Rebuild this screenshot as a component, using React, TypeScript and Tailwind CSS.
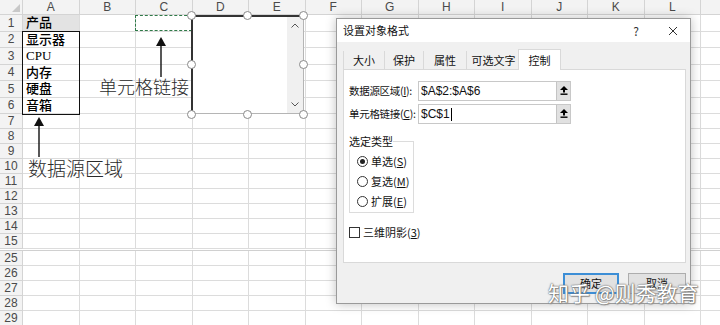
import React from "react";

const COLS = ["A", "B", "C", "D", "E", "F", "G", "H", "I", "J", "K", "L", "M"];
const TOP_ROWS = [1, 2, 3, 4, 5, 6];
const MID_ROWS = [7, 8, 9, 10, 11, 12, 13, 14, 15];
const LOW_ROWS = [25, 26, 27, 28, 29];

const cellText: Record<number, string> = {
  1: "产品",
  2: "显示器",
  3: "CPU",
  4: "内存",
  5: "硬盘",
  6: "音箱",
};

const HANDLES = [
  "left-[187px] top-[11px]",
  "left-[243px] top-[11px]",
  "left-[299px] top-[11px]",
  "left-[187px] top-[60px]",
  "left-[299px] top-[60px]",
  "left-[187px] top-[110px]",
  "left-[243px] top-[110px]",
  "left-[299px] top-[110px]",
];

function Row({ n, h }: { n: number; h: string }) {
  return (
    <div className={`flex ${h}`}>
      <div className="w-[23px] shrink-0 bg-[#f3f3f3] border-r border-b border-[#d4d4d4] flex items-center justify-center text-[12px] text-[#4a4a4a]">
        {n}
      </div>
      {COLS.map((c) => (
        <div
          key={c}
          className={`w-[56.5px] shrink-0 border-r border-b border-[#dcdcdc] flex items-center ${
            c === "A" && n === 1 ? "bg-[#e3e3e3]" : ""
          }`}
        >
          {c === "A" && cellText[n] && (
            <span className="pl-[3px] text-[13px] font-medium text-black [font-family:'Liberation_Serif','Noto_Sans_CJK_SC',serif]">
              {cellText[n]}
            </span>
          )}
        </div>
      ))}
    </div>
  );
}

function UpArrow({ className }: { className: string }) {
  return (
    <svg className={className} width="10" height="40" viewBox="0 0 10 40">
      <polygon points="5,0 0,9 10,9" fill="#111" />
      <line x1="5" y1="8" x2="5" y2="40" stroke="#111" strokeWidth="1.4" />
    </svg>
  );
}

function RefEdit() {
  return (
    <div className="w-[14px] h-full bg-[#e1e1e1] border-l border-[#c4c4c4] flex items-center justify-center">
      <svg width="8" height="10" viewBox="0 0 8 10">
        <polygon points="4,0 0,4 8,4" fill="#000" />
        <rect x="3" y="3.5" width="2" height="3" fill="#000" />
        <rect x="0.5" y="7.5" width="7" height="1.4" fill="#000" />
      </svg>
    </div>
  );
}

function Radio({ label, keyChar, checked }: { label: string; keyChar: string; checked?: boolean }) {
  return (
    <div className="flex items-center h-[20px] pl-[7px]">
      <span className="w-[11px] h-[11px] rounded-full border border-[#333] bg-white flex items-center justify-center">
        {checked && <span className="w-[5px] h-[5px] rounded-full bg-[#222]" />}
      </span>
      <span className="ml-[3px]">
        {label}(<span className="underline">{keyChar}</span>)
      </span>
    </div>
  );
}

export default function App() {
  return (
    <div className="relative w-[720px] h-[325px] overflow-hidden bg-white [font-family:'Liberation_Sans','Noto_Sans_CJK_SC',sans-serif]">
      {/* Column headers */}
      <div className="flex h-[15px]">
        <div className="w-[23px] shrink-0 bg-[#f3f3f3] border-r border-b border-[#d4d4d4] relative">
          <svg className="absolute right-[2px] bottom-[2px]" width="8" height="8" viewBox="0 0 8 8">
            <polygon points="8,0 8,8 0,8" fill="#c8c8c8" />
          </svg>
        </div>
        {COLS.map((c) => (
          <div
            key={c}
            className="w-[56.5px] shrink-0 bg-[#f3f3f3] border-r border-b border-[#d4d4d4] flex items-center justify-center text-[12px] text-[#4a4a4a]"
          >
            {c === "M" ? "" : c}
          </div>
        ))}
      </div>

      {/* Rows */}
      {TOP_ROWS.map((n) => (
        <Row key={n} n={n} h="h-[16.5px]" />
      ))}
      {MID_ROWS.map((n) => (
        <Row key={n} n={n} h="h-[15px]" />
      ))}
      <div className="h-[2px] border-b border-[#d0d0d0]" />
      {LOW_ROWS.map((n) => (
        <Row key={n} n={n} h="h-[15px]" />
      ))}

      {/* Data source border A2:A6 */}
      <div className="absolute left-[22px] top-[30.5px] w-[58px] h-[84px] border-[1.5px] border-[#111]" />

      {/* Copy marquee C1 */}
      <div className="absolute left-[135px] top-[15px] w-[57px] h-[16px] border-[1.5px] border-dashed border-[#2f7a48]" />

      {/* Listbox control */}
      <div className="absolute left-[191px] top-[15px] w-[113px] h-[99px] bg-white border-l-2 border-t-2 border-l-[#333] border-t-[#333] border-r border-b border-r-[#b5b5b5] border-b-[#b5b5b5] flex justify-end">
        <div className="w-[16px] h-full bg-[#f0f0f0] flex flex-col items-center justify-between py-[6px]">
          <svg width="8" height="5" viewBox="0 0 8 5">
            <polyline points="0.5,4.5 4,1 7.5,4.5" fill="none" stroke="#555" strokeWidth="1" />
          </svg>
          <svg width="8" height="5" viewBox="0 0 8 5">
            <polyline points="0.5,0.5 4,4 7.5,0.5" fill="none" stroke="#555" strokeWidth="1" />
          </svg>
        </div>
      </div>
      {HANDLES.map((p) => (
        <div key={p} className={`absolute ${p} w-[9px] h-[9px] rounded-full bg-white border border-[#8a8a8a]`} />
      ))}

      {/* Annotations */}
      <UpArrow className="absolute left-[156px] top-[37px]" />
      <div className="absolute left-[99px] top-[74px] text-[18px] leading-[24px] text-[#2a2a2a] font-light [font-family:'Noto_Sans_CJK_SC',sans-serif]">
        单元格链接
      </div>
      <UpArrow className="absolute left-[34px] top-[117px]" />
      <div className="absolute left-[28px] top-[156px] text-[19px] leading-[24px] text-[#2a2a2a] font-light [font-family:'Noto_Sans_CJK_SC',sans-serif]">
        数据源区域
      </div>

      {/* Dialog */}
      <div className="absolute left-[336px] top-[18px] w-[355px] h-[286px] bg-[#f0f0f0] border border-[#9a9a9a] shadow-[0_0_10px_rgba(0,0,0,0.25)] flex flex-col text-[11px] text-[#111] [font-family:'Noto_Sans_CJK_SC',sans-serif]">
        <div className="h-[23px] bg-white flex items-center pl-[6px] pr-[12px]">
          <span className="flex-1">设置对象格式</span>
          <span className="mr-[29px] text-[12px] text-[#333]">?</span>
          <svg width="10" height="10" viewBox="0 0 10 10">
            <path d="M1 1 L9 9 M9 1 L1 9" stroke="#333" strokeWidth="1" />
          </svg>
        </div>

        <div className="pl-[6px] pr-[4px] pt-[7px] flex flex-col">
          <div className="flex items-end h-[21px] -mb-px relative">
            <div className="w-[41px] h-[19px] border-l border-[#d9d9d9] flex items-center justify-center">大小</div>
            <div className="w-[39px] h-[19px] border-l border-[#d9d9d9] flex items-center justify-center">保护</div>
            <div className="w-[43px] h-[19px] border-l border-[#d9d9d9] flex items-center justify-center">属性</div>
            <div className="w-[54px] h-[19px] border-l border-[#d9d9d9] flex items-center justify-center">可选文字</div>
            <div className="w-[43px] h-[21px] -ml-[2px] bg-white border-t border-l border-r border-[#d9d9d9] flex items-center justify-center">控制</div>
          </div>
          <div className="h-[194px] bg-white border border-[#d9d9d9] pl-[5px] pt-[11px] flex flex-col">
            <div className="flex items-center h-[20px]">
              <span className="w-[69px] shrink-0 whitespace-nowrap text-[10.5px] tracking-[-0.3px]">
                数据源区域(<span className="underline">I</span>):
              </span>
              <div className="w-[153px] h-full border border-[#c8c8c8] flex items-center">
                <span className="flex-1 pl-[2px] text-[12px] [font-family:'Liberation_Sans',sans-serif]">$A$2:$A$6</span>
                <RefEdit />
              </div>
            </div>
            <div className="flex items-center h-[20px] mt-[3px]">
              <span className="w-[69px] shrink-0 whitespace-nowrap text-[10.5px] tracking-[-0.3px]">
                单元格链接(<span className="underline">C</span>):
              </span>
              <div className="w-[153px] h-full border border-[#c8c8c8] flex items-center">
                <span className="flex-1 pl-[2px] text-[12px] flex items-center [font-family:'Liberation_Sans',sans-serif]">
                  $C$1
                  <span className="w-px h-[13px] bg-black ml-[1px]" />
                </span>
                <RefEdit />
              </div>
            </div>

            <fieldset className="mt-[9px] w-[65px] h-[80px] border border-[#dcdcdc] flex flex-col">
              <legend className="px-0 -ml-px text-[11px]">选定类型</legend>
              <div className="pt-[2px]">
                <Radio label="单选" keyChar="S" checked />
                <Radio label="复选" keyChar="M" />
                <Radio label="扩展" keyChar="E" />
              </div>
            </fieldset>

            <div className="flex items-center mt-[11px]">
              <span className="w-[11px] h-[11px] border border-[#333] bg-white" />
              <span className="ml-[3px]">
                三维阴影(<span className="underline">3</span>)
              </span>
            </div>
          </div>
        </div>

        <div className="flex justify-end gap-[9px] pr-[4px] mt-[10px]">
          <div className="w-[56px] h-[21px] bg-[#e1e1e1] border-2 border-[#3c8ed6] flex items-center justify-center">确定</div>
          <div className="w-[58px] h-[21px] bg-[#e1e1e1] border border-[#adadad] flex items-center justify-center">取消</div>
        </div>
      </div>

      {/* Watermark */}
      <div className="absolute left-[548px] top-[279px] text-[21px] leading-[26px] text-white [font-family:'Noto_Sans_CJK_SC',sans-serif] [text-shadow:0_0_1px_#555,0_0_2px_#777,1px_1px_1px_#999]">
        知乎 @则秀教育
      </div>
    </div>
  );
}
